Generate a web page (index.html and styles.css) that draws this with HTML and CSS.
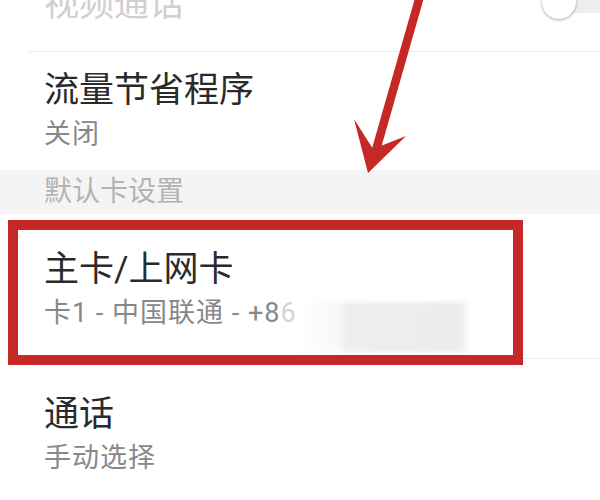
FILE: index.html
```html
<!DOCTYPE html>
<html>
<head>
	<meta charset="UTF-8">
	<title>双卡设置</title>
	<link rel="stylesheet" href="styles.css">
</head>

<body>

<div class="screen">
	<div class="row row-top">
		<span class="title dim">视频通话</span>
		<span class="switch"><span class="knob"></span><span class="track"></span></span>
	</div>

	<div class="row item-first">
		<div class="title">流量节省程序</div>
		<div class="sub">关闭</div>
	</div>

	<div class="group">默认卡设置</div>

	<div class="row">
		<div class="title">主卡/上网卡</div>
		<div class="sub">卡1 - 中国联通 - +8<span class="fade">6</span><span class="blur"></span></div>
	</div>

	<div class="row row-last">
		<div class="title">通话</div>
		<div class="sub">手动选择</div>
	</div>

	<!-- 标注：红框和箭头 -->
	<div class="mark"></div>
	<svg class="arrow" width="600" height="500" viewBox="0 0 600 500">
		<line x1="420" y1="-4" x2="376" y2="150" stroke="#c62828" stroke-width="8.5" />
		<polygon points="354,119 373,149 406,136 368,173" fill="#c62828" />
	</svg>
</div>

</body>
</html>
```

FILE: styles.css
```css
*{ margin: 0; padding: 0;}
body{ background: #fff; font-family: "Roboto", "Noto Sans CJK SC", sans-serif;}

.screen{ width: 600px; height: 500px; overflow: hidden; position: relative; background: #fff;}

.row{ margin-left: 28px; padding: 33px 0 25px 16px; border-bottom: 1px solid #ececec;}
.row-top{ display: flex; align-items: center; justify-content: space-between; height: 100px; margin-top: -48px; padding-top: 0; padding-bottom: 0; box-sizing: border-box;}
.row-top .title{ padding-top: 6px;}
.item-first{ padding-top: 16px; padding-bottom: 16px; border-bottom: none;}
.row-last{ border-bottom: none;}

.title{ font-size: 35px; line-height: 46px; color: #2a2a2a;}
.title.dim{ color: #d0d0d0;}
.sub{ display: flex; height: 40px; font-size: 27px; line-height: 40px; letter-spacing: 1px; color: #888; white-space: pre;}
.sub .fade{ color: #d4d4d4;}
.sub .blur{ width: 172px; height: 50px; margin-top: 9px; margin-bottom: -19px; background: linear-gradient(to right, #fff, #f7f7f7 26%, #eeeeee 28%, #ececec 95%, #fff); filter: blur(2px);}

/* 开关 */
.switch{ display: flex; align-items: center; margin-right: -18px;}
.knob{ width: 34px; height: 34px; border-radius: 50%; background: #fff; box-shadow: 0 1px 3px rgba(0,0,0,.35); position: relative; z-index: 1;}
.track{ width: 60px; height: 22px; margin-left: -18px; border-radius: 11px; background: #eee;}

/* 分组标题 */
.group{ height: 44px; line-height: 44px; padding-left: 44px; background: #f4f4f4; font-size: 28px; color: #b3b3b3;}

/* 标注 */
.mark{ position: absolute; left: 8px; top: 220px; width: 515px; height: 145px; box-sizing: border-box; border: 10px solid #c62828;}
.arrow{ position: absolute; left: 0; top: 0; pointer-events: none;}
```
